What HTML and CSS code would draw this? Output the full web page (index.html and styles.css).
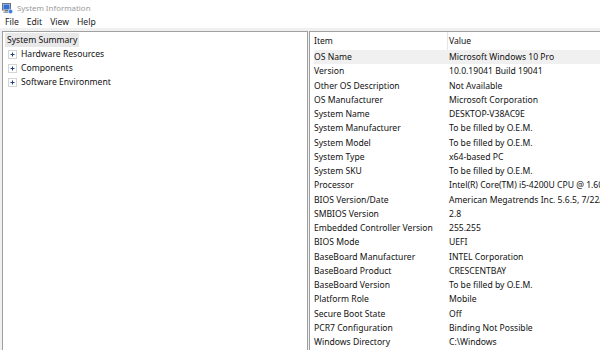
FILE: index.html
```html
<!DOCTYPE html>
<html lang="en">
<head>
    <meta charset="UTF-8">
    <title>System Information</title>
    <link rel="stylesheet" href="styles.css">
</head>
<body>

<!-- Barra de título -->
<div class="title-bar">
    <svg class="app-icon" width="11" height="11" viewBox="0 0 11 11">
        <rect x="0.5" y="0.5" width="8" height="6.5" fill="#d8dde6" stroke="#6b7280"/>
        <rect x="1.5" y="1.5" width="6" height="4.5" fill="#2f6fd6"/>
        <rect x="3" y="7" width="3" height="1.5" fill="#6b7280"/>
        <rect x="1.5" y="8.5" width="6" height="1.5" fill="#9aa1ab"/>
        <circle cx="8.5" cy="8.5" r="2.2" fill="#3a7be0" stroke="#fff" stroke-width="0.6"/>
    </svg>
    <span class="title-text">System Information</span>
</div>

<!-- Menú -->
<div class="menu-bar">
    <span>File</span>
    <span>Edit</span>
    <span>View</span>
    <span>Help</span>
</div>

<div class="main">
    <!-- Árbol de categorías -->
    <div class="tree-pane">
        <div class="tree-root">System Summary</div>
        <div class="tree-item">
            <svg class="expander" width="9" height="9" viewBox="0 0 9 9">
                <rect x="0.5" y="0.5" width="8" height="8" fill="#fff" stroke="#a8a8a8" stroke-dasharray="1 1"/>
                <path d="M2.5 4.5h4M4.5 2.5v4" stroke="#1f3f8f" stroke-width="1"/>
            </svg>
            <span>Hardware Resources</span>
        </div>
        <div class="tree-item">
            <svg class="expander" width="9" height="9" viewBox="0 0 9 9">
                <rect x="0.5" y="0.5" width="8" height="8" fill="#fff" stroke="#a8a8a8" stroke-dasharray="1 1"/>
                <path d="M2.5 4.5h4M4.5 2.5v4" stroke="#1f3f8f" stroke-width="1"/>
            </svg>
            <span>Components</span>
        </div>
        <div class="tree-item">
            <svg class="expander" width="9" height="9" viewBox="0 0 9 9">
                <rect x="0.5" y="0.5" width="8" height="8" fill="#fff" stroke="#a8a8a8" stroke-dasharray="1 1"/>
                <path d="M2.5 4.5h4M4.5 2.5v4" stroke="#1f3f8f" stroke-width="1"/>
            </svg>
            <span>Software Environment</span>
        </div>
    </div>

    <!-- Tabla de detalles -->
    <div class="detail-pane">
        <div class="list-header">
            <div class="col-item">Item</div>
            <div class="col-value">Value</div>
        </div>
        <div class="list-body" id="list-body"></div>
    </div>
</div>

<script>
    // Datos del resumen del sistema
    const rows = [
        ['OS Name', 'Microsoft Windows 10 Pro'],
        ['Version', '10.0.19041 Build 19041'],
        ['Other OS Description', 'Not Available'],
        ['OS Manufacturer', 'Microsoft Corporation'],
        ['System Name', 'DESKTOP-V38AC9E'],
        ['System Manufacturer', 'To be filled by O.E.M.'],
        ['System Model', 'To be filled by O.E.M.'],
        ['System Type', 'x64-based PC'],
        ['System SKU', 'To be filled by O.E.M.'],
        ['Processor', 'Intel(R) Core(TM) i5-4200U CPU @ 1.60GHz, 2301 Mhz'],
        ['BIOS Version/Date', 'American Megatrends Inc. 5.6.5, 7/22/2014'],
        ['SMBIOS Version', '2.8'],
        ['Embedded Controller Version', '255.255'],
        ['BIOS Mode', 'UEFI'],
        ['BaseBoard Manufacturer', 'INTEL Corporation'],
        ['BaseBoard Product', 'CRESCENTBAY'],
        ['BaseBoard Version', 'To be filled by O.E.M.'],
        ['Platform Role', 'Mobile'],
        ['Secure Boot State', 'Off'],
        ['PCR7 Configuration', 'Binding Not Possible'],
        ['Windows Directory', 'C:\\Windows']
    ];

    const body = document.getElementById('list-body');
    rows.forEach((r, i) => {
        const row = document.createElement('div');
        row.className = i === 0 ? 'list-row selected' : 'list-row';
        row.innerHTML = `<div class="col-item">${r[0]}</div><div class="col-value">${r[1]}</div>`;
        body.appendChild(row);
    });
</script>

</body>
</html>
```

FILE: styles.css
```css
/* Estilo global */
body {
    margin: 0;
    padding: 0;
    background-color: #ffffff;
    font-family: 'Noto Sans', sans-serif;
    font-size: 8.6px;
    color: #111;
    width: 600px;
    height: 350px;
    overflow: hidden;
}

/* Barra de título */
.title-bar {
    height: 16px;
    display: flex;
    align-items: center;
    padding-left: 2px;
}

.app-icon {
    margin-right: 4px;
}

.title-text {
    color: #9a9a9a;
    font-size: 7.9px;
}

/* Menú */
.menu-bar {
    height: 12px;
    display: flex;
    align-items: center;
    padding-left: 5px;
    gap: 8px;
    color: #222;
}

/* Contenedor principal */
.main {
    display: flex;
    background-color: #f0f0f0;
    padding-top: 3px;
    padding-left: 2px;
    height: 322px;
    gap: 1px;
}

/* Panel izquierdo */
.tree-pane {
    width: 302px;
    flex-shrink: 0;
    background-color: #ffffff;
    border: 1px solid #a0a0a0;
    border-bottom: none;
    padding: 1px 0 0 2px;
}

.tree-root {
    display: inline-block;
    background-color: #e8e8e8;
    padding: 0 2px 0 2px;
    height: 14px;
    line-height: 15px;
}

.tree-item {
    display: flex;
    align-items: center;
    height: 13.5px;
    padding-left: 3px;
    padding-top: 0.5px;
}

.expander {
    margin-right: 4px;
}

/* Panel derecho */
.detail-pane {
    flex: 1;
    background-color: #ffffff;
    border: 1px solid #a0a0a0;
    border-right: none;
    border-bottom: none;
    padding-left: 4px;
    overflow: hidden;
}

.list-header {
    display: flex;
    height: 18px;
    line-height: 18px;
}

.list-header .col-value {
    border-left: 1px solid #e5e5e5;
    padding-left: 1px;
}

.list-row {
    display: flex;
    height: 14.25px;
    line-height: 14.25px;
    white-space: nowrap;
}

.list-row.selected {
    background-color: #f0f0f0;
}

.col-item {
    width: 133px;
    flex-shrink: 0;
}

.col-value {
    padding-left: 2px;
    white-space: nowrap;
}
```
